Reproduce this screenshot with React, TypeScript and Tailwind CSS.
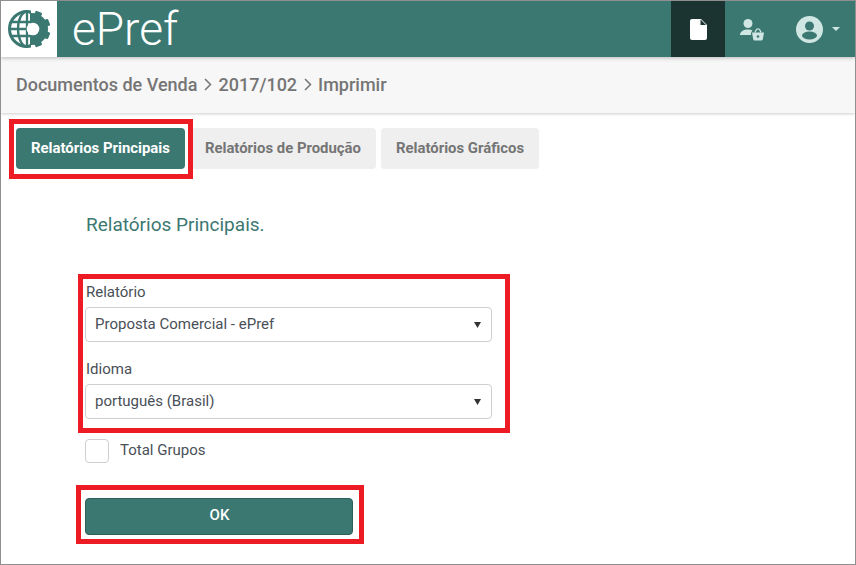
import React from "react";

function Logo() {
  const teeth = [-67.5, -22.5, 22.5, 67.5];
  return (
    <svg width="44" height="44" viewBox="0 0 44 44" fill="none">
      <defs>
        <clipPath id="globe-left"><rect x="0" y="0" width="24" height="44" /></clipPath>
        <clipPath id="gear-right"><rect x="23" y="0" width="21" height="44" /></clipPath>
      </defs>
      <g clipPath="url(#globe-left)" stroke="#3b7872" fill="none">
        <circle cx="20" cy="22" r="17.500" strokeWidth="3" />
        <ellipse cx="20" cy="22" rx="9" ry="17.500" strokeWidth="2.300" />
        <path d="M20 4v36M4 15h22M4 29h22M2 22h20" strokeWidth="2.300" />
      </g>
      <g clipPath="url(#gear-right)" fill="#3b7872">
        <circle cx="25" cy="22" r="16" />
        {teeth.map((a) => (
          <rect key={a} x="37" y="18.500" width="6.500" height="7" rx="1" transform={`rotate(${a} 25 22)`} />
        ))}
      </g>
      <circle cx="26" cy="22" r="6.300" fill="#fff" />
    </svg>
  );
}

function Tab({ children, active }: { children: React.ReactNode; active?: boolean }) {
  return (
    <div
      className={
        active
          ? "h-[41px] px-[15px] rounded-[4px] bg-[#3b7872] text-white text-[14.9px] font-bold flex items-center"
          : "h-[41px] px-[15px] rounded-[4px] bg-[#efefef] text-[#757575] text-[14.9px] font-bold flex items-center"
      }
    >
      {children}
    </div>
  );
}

function SelectBox({ value }: { value: string }) {
  return (
    <div className="mt-[4px] h-[35px] w-[407px] rounded-[4px] border border-[#cfcfcf] bg-white flex items-center justify-between pl-[9px] pr-[10px] text-[15px] text-[#495057]">
      <span>{value}</span>
      <svg width="7" height="6" viewBox="0 0 7 6"><path d="M0 0h7L3.500 6z" fill="#333" /></svg>
    </div>
  );
}

function RedBox({ className }: { className: string }) {
  return <div className={"absolute border-[5px] border-[#ed1c24] pointer-events-none " + className} />;
}

function Chevron() {
  return (
    <svg className="mx-[6px]" width="9" height="13" viewBox="0 0 9 13" fill="none">
      <path d="M2 1l5.500 5.500-5.500 5.500" stroke="#757575" strokeWidth="1.500" />
    </svg>
  );
}

export default function App() {
  return (
    <div
      className="relative w-[856px] h-[565px] bg-white border border-[#8f8f8f] overflow-hidden"
      style={{ fontFamily: "Roboto, sans-serif" }}
    >
      <header className="h-[56px] bg-[#3b7872] flex items-center relative z-10 shadow-[0_1px_4px_rgba(0,0,0,0.25)]">
        <div className="w-[56px] h-[56px] bg-white flex items-center justify-center">
          <Logo />
        </div>
        <div className="ml-[15px] text-[46px] leading-none font-light text-white -mt-[1px]">ePref</div>
        <div className="ml-auto flex items-center h-full">
          <div className="w-[54px] h-full bg-[#1b3331] flex items-center justify-center">
            <svg width="17" height="21" viewBox="0 0 17 21">
              <path d="M2 0h9l6 6v13a2 2 0 0 1-2 2H2a2 2 0 0 1-2-2V2a2 2 0 0 1 2-2z" fill="#fff" />
              <path d="M10.500 0.500v5.500H16z" fill="#1b3331" />
            </svg>
          </div>
          <div className="w-[71px] h-full flex items-center pl-[14px]">
            <svg width="26" height="24" viewBox="0 0 26 24" fill="#cfe6e3">
              <circle cx="9" cy="6.500" r="4.500" />
              <path d="M1 18c0-3.500 3.500-5.500 8-5.500 1.800 0 3.200.3 4.500.7-1 1-1.500 2.800-1.600 4.800z" />
              <path d="M13 15.500h12l-1.200 6.800a1.500 1.500 0 0 1-1.500 1.200h-6.600a1.500 1.500 0 0 1-1.500-1.200z" />
              <path d="M16 15.500l1-2.300a2.200 2.200 0 0 1 4 0l1 2.300" fill="none" stroke="#cfe6e3" strokeWidth="1.300" />
              <circle cx="19" cy="19.500" r="1.300" fill="#3b7872" />
            </svg>
          </div>
          <div className="w-[59px] h-full flex items-center">
            <svg width="27" height="27" viewBox="0 0 27 27">
              <circle cx="13.500" cy="13.500" r="13.500" fill="#cfe6e3" />
              <circle cx="13.500" cy="10" r="4.500" fill="#3b7872" />
              <ellipse cx="13.500" cy="19.500" rx="7.500" ry="4" fill="#3b7872" />
            </svg>
            <svg className="ml-[9px]" width="8" height="4" viewBox="0 0 8 4"><path d="M0 0h8L4 4z" fill="#cfe6e3" /></svg>
          </div>
        </div>
      </header>

      <nav className="h-[56px] bg-[#f7f7f7] flex items-center pl-[15px] pb-[1px] text-[18px] font-medium text-[#757575] shadow-[0_1px_3px_rgba(0,0,0,0.2)]">
        <span>Documentos de Venda</span>
        <Chevron />
        <span>2017/102</span>
        <Chevron />
        <span>Imprimir</span>
      </nav>

      <main className="pl-[15px] pt-[15px]">
        <div className="flex gap-[5px]">
          <Tab active>Relatórios Principais</Tab>
          <Tab>Relatórios de Produção</Tab>
          <Tab>Relatórios Gráficos</Tab>
        </div>

        <div className="pl-[69px]">
          <h2 className="mt-[44px] ml-[1px] text-[19px] leading-[24px] font-normal text-[#3b7872]">Relatórios Principais.</h2>

          <div className="mt-[45px] ml-[1px] text-[15px] leading-[21px] text-[#495057]">Relatório</div>
          <SelectBox value="Proposta Comercial - ePref" />

          <div className="mt-[17px] ml-[1px] text-[15px] leading-[21px] text-[#495057]">Idioma</div>
          <SelectBox value="português (Brasil)" />

          <div className="mt-[20px] flex items-center">
            <div className="w-[24px] h-[24px] rounded-[4px] border border-[#cfcfcf] bg-white" />
            <span className="ml-[11px] text-[15px] leading-[22px] -mt-[2px] text-[#495057]">Total Grupos</span>
          </div>

          <div className="mt-[35px] w-[268px] h-[37px] pl-[1px] pb-[2px] rounded-[4px] bg-[#3b7872] border border-[#2f5f5a] text-white text-[15px] font-medium flex items-center justify-center">
            OK
          </div>
        </div>
      </main>

      <RedBox className="left-[8px] top-[118px] w-[184px] h-[60px]" />
      <RedBox className="left-[77px] top-[273px] w-[432px] h-[159px]" />
      <RedBox className="left-[75px] top-[484px] w-[288px] h-[59px]" />
    </div>
  );
}
